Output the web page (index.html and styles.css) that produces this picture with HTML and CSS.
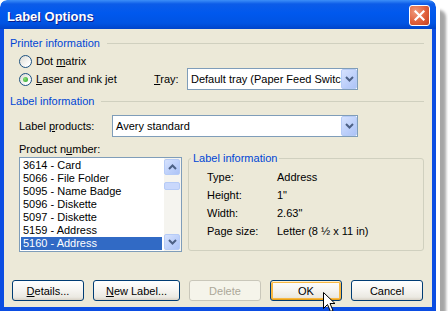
FILE: index.html
```html
<!DOCTYPE html>
<html lang="en">
  <head>
    <meta charset="UTF-8" />
    <title>Label Options</title>
    <link rel="stylesheet" href="styles.css">
  </head>
  <body>
    <div class="window">
      <!-- Title bar -->
      <div class="titlebar">
        <span class="title">Label Options</span>
        <button class="close">
          <svg width="11" height="11" viewBox="0 0 11 11">
            <path d="M1.5 1.5 L9.5 9.5 M9.5 1.5 L1.5 9.5" stroke="#fff" stroke-width="2.2" stroke-linecap="square" />
          </svg>
        </button>
      </div>

      <div class="client">
        <!-- Printer information -->
        <div class="group-head">Printer information</div>
        <div class="radio-row first-row">
          <span class="radio"></span>
          <span class="radio-text">Dot <u>m</u>atrix</span>
        </div>
        <div class="radio-row tray-row">
          <span class="radio-label">
            <span class="radio checked"><span class="dot"></span></span>
            <span class="radio-text"><u>L</u>aser and ink jet</span>
          </span>
          <span class="tray-label"><u>T</u>ray:</span>
          <div class="combo tray-combo">
            <span class="combo-text">Default tray (Paper Feed Switch)</span>
            <span class="combo-btn">
              <svg width="9" height="6" viewBox="0 0 9 6"><path d="M1 1 L4.5 4.5 L8 1" fill="none" stroke="#4d6185" stroke-width="2" /></svg>
            </span>
          </div>
        </div>

        <!-- Label information -->
        <div class="group-head second-head">Label information</div>
        <div class="products-row">
          <span class="field-label">Label <u>p</u>roducts:</span>
          <div class="combo products-combo">
            <span class="combo-text">Avery standard</span>
            <span class="combo-btn">
              <svg width="9" height="6" viewBox="0 0 9 6"><path d="M1 1 L4.5 4.5 L8 1" fill="none" stroke="#4d6185" stroke-width="2" /></svg>
            </span>
          </div>
        </div>
        <div class="field-label number-label">Product n<u>u</u>mber:</div>

        <div class="lower">
          <div class="listbox">
            <ul class="items">
              <li>3614 - Card</li>
              <li>5066 - File Folder</li>
              <li>5095 - Name Badge</li>
              <li>5096 - Diskette</li>
              <li>5097 - Diskette</li>
              <li>5159 - Address</li>
              <li class="selected">5160 - Address</li>
            </ul>
            <div class="scrollbar">
              <span class="sb-btn">
                <svg width="9" height="6" viewBox="0 0 9 6"><path d="M1 5 L4.5 1.5 L8 5" fill="none" stroke="#4d6185" stroke-width="2" /></svg>
              </span>
              <span class="sb-thumb"></span>
              <span class="sb-track"></span>
              <span class="sb-btn">
                <svg width="9" height="6" viewBox="0 0 9 6"><path d="M1 1 L4.5 4.5 L8 1" fill="none" stroke="#4d6185" stroke-width="2" /></svg>
              </span>
            </div>
          </div>

          <fieldset class="info-box">
            <legend>Label information</legend>
            <div class="info-grid">
              <span>Type:</span><span>Address</span>
              <span>Height:</span><span>1"</span>
              <span>Width:</span><span>2.63"</span>
              <span>Page size:</span><span>Letter (8 &frac12; x 11 in)</span>
            </div>
          </fieldset>
        </div>

        <!-- Bottom buttons -->
        <div class="buttons">
          <button class="btn"><u>D</u>etails...</button>
          <button class="btn btn-wide"><u>N</u>ew Label...</button>
          <button class="btn btn-disabled">Delete</button>
          <button class="btn btn-hot">OK</button>
          <button class="btn">Cancel</button>
        </div>
      </div>

      <svg class="cursor" width="13" height="21" viewBox="0 0 13 21">
        <path d="M0.5 0.5 L0.5 16.5 L4.5 12.5 L7.5 19.5 L10 18.5 L7 11.5 L12 11.5 Z" fill="#fff" stroke="#000" stroke-width="1" stroke-linejoin="miter" />
      </svg>
    </div>
  </body>
</html>
```

FILE: styles.css
```css
/* Reset */
* {
  margin: 0;
  padding: 0;
  box-sizing: border-box;
}

body {
  background: #fff;
  font-family: "Liberation Sans", Arial, sans-serif;
  font-size: 11px;
  color: #000;
}

/* Window frame */
.window {
  position: relative;
  width: 436px;
  height: 311px;
  display: flex;
  flex-direction: column;
  border-radius: 7px 7px 0 0;
  outline: 4px solid #fff;
  box-shadow: 10px 10px 3px rgba(0, 0, 0, 0.35);
}

.titlebar {
  height: 29px;
  flex: none;
  display: flex;
  align-items: flex-start;
  justify-content: space-between;
  padding: 0 6px 0 7px;
  border-radius: 7px 7px 0 0;
  background: linear-gradient(#3d8ff8, #0c5ce8 4px, #0058ee 45%, #0054e3 80%, #0044c9);
}

.title {
  margin-top: 9px;
  font-weight: bold;
  font-size: 13px;
  line-height: 15px;
  color: #fff;
  text-shadow: 1px 1px #0b1d8a;
}

.close {
  margin-top: 5px;
  width: 21px;
  height: 21px;
  display: flex;
  align-items: center;
  justify-content: center;
  border: 1px solid #fff;
  border-radius: 3px;
  background: radial-gradient(circle at 30% 30%, #f09a7c, #e0603b 55%, #c2401f);
}

.client {
  flex: 1;
  background: #ece9d8;
  border: 4px solid #0b4de2;
  border-top: 0;
  padding: 8px 8px 0 6px;
}

/* Group headers */
.group-head {
  display: flex;
  align-items: center;
  height: 13px;
  line-height: 13px;
  color: #0046d5;
}

.group-head::after {
  content: "";
  flex: 1;
  border-top: 1px solid #d0d0bf;
  margin-left: 7px;
}

.second-head {
  margin-top: 5px;
}

/* Radio buttons */
.radio-row {
  display: flex;
  align-items: center;
  margin-left: 9px;
}

.first-row {
  height: 16px;
  margin-top: 3px;
}

.tray-row {
  height: 22px;
  margin-top: -1px;
}

.radio-label {
  display: flex;
  align-items: center;
  width: 135px;
}

.radio {
  width: 13px;
  height: 13px;
  flex: none;
  display: flex;
  align-items: center;
  justify-content: center;
  border: 1px solid #1c5180;
  border-radius: 50%;
  background: linear-gradient(135deg, #dcdbd3, #fff 80%);
}

.dot {
  width: 5px;
  height: 5px;
  border-radius: 50%;
  background: radial-gradient(circle at 35% 35%, #8ce07a, #21a121);
}

.radio-text {
  margin-left: 4px;
}

.tray-label {
  width: 33px;
}

/* Combo boxes */
.combo {
  height: 22px;
  display: flex;
  border: 1px solid #7f9db9;
  background: #fff;
}

.tray-combo {
  width: 171px;
}

.products-combo {
  width: 246px;
}

.combo-text {
  flex: 1;
  overflow: hidden;
  white-space: nowrap;
  line-height: 20px;
  padding-left: 3px;
}

.combo-btn,
.sb-btn {
  width: 16px;
  height: 20px;
  flex: none;
  display: flex;
  align-items: center;
  justify-content: center;
  border: 1px solid #b6cbf6;
  border-radius: 2px;
  background: linear-gradient(135deg, #d6e2fd, #bccffa 60%, #adc3f6);
}

.products-row {
  display: flex;
  align-items: center;
  margin: 7px 0 0 9px;
}

.field-label {
  width: 93px;
  line-height: 13px;
}

.number-label {
  margin: 6px 0 0 9px;
  height: 13px;
}

/* List and info box */
.lower {
  display: flex;
  align-items: flex-start;
  margin-top: 1px;
}

.listbox {
  width: 163px;
  height: 95px;
  margin-left: 9px;
  display: flex;
  border: 1px solid #7f9db9;
  background: #fff;
}

.items {
  flex: 1;
  list-style: none;
  padding: 1px 2px 0 1px;
}

.items li {
  height: 13px;
  line-height: 13px;
  padding-left: 2px;
  white-space: nowrap;
}

.items li.selected {
  background: #316ac5;
  color: #fff;
}

.scrollbar {
  width: 17px;
  display: flex;
  flex-direction: column;
  padding: 1px 1px 1px 0;
  background: #f5f4ef;
}

.sb-btn {
  height: 16px;
}

.sb-thumb {
  height: 8px;
  margin-top: 7px;
  border: 1px solid #b6cbf6;
  border-radius: 2px;
  background: #c9d8fc;
}

.sb-track {
  flex: 1;
}

.info-box {
  flex: 1;
  min-width: 0;
  height: 100px;
  margin: -6px 0 0 6px;
  padding: 3px 0 0 2px;
  border: 1px solid #d0d0bf;
  border-radius: 3px;
}

.info-box legend {
  color: #0046d5;
  line-height: 14px;
  padding: 0 2px;
}

.info-grid {
  display: grid;
  grid-template-columns: 70px auto;
  grid-auto-rows: 18px;
  line-height: 18px;
  padding-left: 16px;
}

/* Buttons */
.buttons {
  display: flex;
  gap: 9px;
  margin: 28px 0 0 2px;
}

.btn {
  width: 72px;
  height: 21px;
  font-family: "Liberation Sans", Arial, sans-serif;
  font-size: 11px;
  color: #000;
  border: 1px solid #003c74;
  border-radius: 3px;
  background: linear-gradient(#fff, #f5f4f0 50%, #ebe9e2 85%, #d8d2c6);
}

.btn-wide {
  width: 87px;
}

.btn-disabled {
  color: #aca899;
  border-color: #c9c7ba;
  background: #f5f4ea;
}

.btn-hot {
  box-shadow: inset 0 1px #fff0cf, inset 0 -1px #e5a01a, inset 0 0 0 2px #f8b944;
}

/* Mouse pointer over OK */
.cursor {
  position: absolute;
  left: 323px;
  top: 292px;
}
```
